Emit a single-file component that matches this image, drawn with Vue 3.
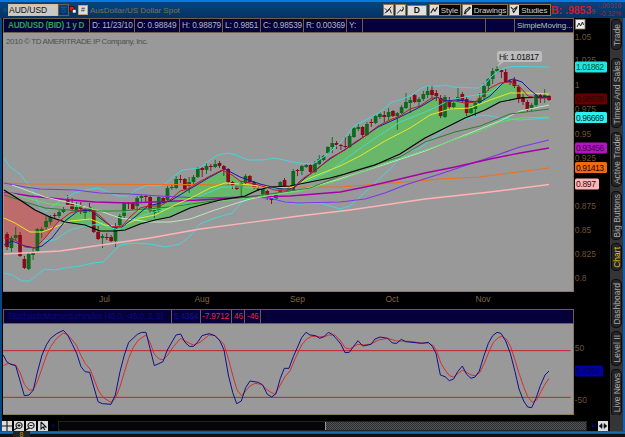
<template>
  <div class="window">
    <header class="toolbar">
      <span class="link-dot"></span>
      <div class="symbol-input">AUD/USD</div>
      <svg class="dropdown" viewBox="0 0 12 12">
        <path d="M2 2.5h8M4 5h4M3 7l3 2.5L9 7" />
      </svg>
      <svg class="link-icon" viewBox="0 0 9 12">
        <rect x="0.5" y="2.5" width="4.5" height="4.5" fill="#e01818" stroke="#200" stroke-width="0.6" />
        <rect x="3.5" y="5.5" width="3.5" height="3.5" fill="#fff" stroke="#222" stroke-width="0.6" />
      </svg>
      <span class="mini-button info">#</span>
      <span class="instrument">AusDollar/US Dollar Spot</span>
      <div class="tools">
        <svg class="tool-icon" viewBox="0 0 11 12">
          <path d="M1 4l3 3 5-5M3 9l4-4 2 5M1 10l3-3" />
        </svg>
        <svg class="tool-icon" viewBox="0 0 11 12">
          <path d="M1.5 10l4-4M5 6a2.2 2.2 0 1 0 3-4M7 8l2-3" />
        </svg>
        <span class="period">D</span>
        <button v-for="tool in tools" :key="tool.name" class="tool" :class="tool.cls">
          <svg class="tool-glyph" viewBox="0 0 11 11"><path :d="tool.icon" /></svg>
          <span>{{ tool.name }}</span>
        </button>
      </div>
      <span class="bid">B: .9853<small>9</small></span>
      <span class="change"><span>-.00316</span><span>-0.32%</span></span>
    </header>

    <div class="body">
      <main class="charts">
        <div class="quote-bar">
          <span v-for="q in quotes" :key="q.text" class="cell" :class="q.cls">{{ q.text }}</span>
        </div>

        <svg class="price-chart" viewBox="3 33 571 259">
          <defs>
            <clipPath id="early"><rect x="3" y="33" width="60" height="259" /></clipPath>
            <clipPath id="late"><rect x="63" y="33" width="511" height="259" /></clipPath>
          </defs>
          <text x="6" y="43.5" class="copyright" textLength="142">2010 © TD AMERITRADE IP Company, Inc.</text>
          <polygon :points="cloud" fill="#bd6b6b" clip-path="url(#early)" />
          <polygon :points="cloud" fill="#69b869" clip-path="url(#late)" />
          <g v-for="c in candles" :key="c.x" :fill="c.color">
            <rect :x="c.x - 0.4" :y="c.high" width="0.9" :height="c.low - c.high" />
            <rect :x="c.x - 1.8" :y="c.top" width="3.7" :height="c.height" />
          </g>
          <polyline
            v-for="line in lines"
            :key="line.name"
            :points="line.points"
            :stroke="line.color"
            :stroke-width="line.width || 1"
            class="line"
          />
          <path d="M497 67l4-7h5z" fill="#bdbdbd" />
          <rect x="497" y="51" width="45" height="11" rx="2.5" fill="#bdbdbd" />
          <text x="499" y="60" class="hi" textLength="40">Hi: 1.01817</text>
          <path d="M573.5 33V292M3 291.5H574" class="frame" />
        </svg>

        <svg class="time-axis" viewBox="3 292 571 17">
          <text v-for="m in months" :key="m.name" :x="m.x" y="302" text-anchor="middle">{{ m.name }}</text>
        </svg>

        <div class="study-bar">
          <span v-for="s in studyCells" :key="s.text" class="cell" :class="s.cls">{{ s.text }}</span>
        </div>

        <svg class="study-chart" viewBox="9 117 1713 273">
          <path d="M9 197H1712M9 337H1712" stroke="#c4202c" stroke-width="3" />
          <polyline class="line" :points="stochSlow" stroke="#d62f2f" stroke-width="3" />
          <polyline class="line" :points="stochFast" stroke="#10108c" stroke-width="3" />
          <path d="M1720.5 117V390M9 388.5H1722" class="frame" stroke-width="3" />
        </svg>
      </main>

      <svg class="price-axis" viewBox="574 18 36 397">
        <rect x="575.5" y="19.5" width="9.5" height="9.5" fill="#eee" stroke="#8b7a58" stroke-width="0.8" />
        <path d="M577 27l2-4 1.5 3 2-4 1 3" class="axis-icon" />
        <text v-for="t in ticks" :key="t.y" x="574.7" :y="t.y + 3">{{ t.label }}</text>
        <g v-for="tag in tags" :key="tag.label">
          <rect x="575" :y="tag.y - 5.5" :width="tag.width" height="11" rx="1.5" :fill="tag.fill" />
          <text
            x="576"
            :y="tag.y + 3"
            :textLength="tag.width - 4"
            :style="{ fill: tag.color }"
          >{{ tag.label }}</text>
        </g>
      </svg>

      <nav class="tabs">
        <div
          v-for="tab in tabs"
          :key="tab.name"
          class="tab"
          :class="{ active: tab.name === 'Chart' }"
          :style="{ height: tab.height + 'px', marginTop: tab.gap + 'px' }"
        >
          <span>{{ tab.name }}</span>
        </div>
      </nav>
    </div>

    <footer class="scroll-row">
      <svg v-for="(icon, i) in zoomIcons" :key="i" class="zoom-icon" viewBox="0 0 10 10">
        <path :d="icon" />
      </svg>
      <span class="arrow left"></span>
      <div class="track"><div class="thumb"></div></div>
      <span class="arrow right"></span>
      <svg class="fit-icon" viewBox="0 0 10 10">
        <path d="M1 5l3-2.5v5zM9 5L6 2.5v5zM3 5h4" />
      </svg>
      <div class="strip-end"></div>
    </footer>
    <div class="bottom-edge"><span class="bottom-tab">8</span></div>
  </div>
</template>

<script setup>
const GREEN = "#0b6b1c";
const RED = "#8c0a18";

const tools = [
  { name: "Style", cls: "style", icon: "M1 9l3-5 2 3 3-5" },
  { name: "Drawings", cls: "drawings", icon: "M2 9l1-3 5-4 1 1-5 5zM1 10h3" },
  { name: "Studies", cls: "studies", icon: "M1 2l3 3 5-4M4 9l5-7M3 6l2 3" },
];

const quotes = [
  { text: "AUD/USD (BID) 1 y D", cls: "q-symbol" },
  { text: "D: 11/23/10", cls: "q-date" },
  { text: "O: 0.98849", cls: "q-open" },
  { text: "H: 0.98879", cls: "q-high" },
  { text: "L: 0.9851", cls: "q-low" },
  { text: "C: 0.98539", cls: "q-close" },
  { text: "R: 0.00369", cls: "q-range" },
  { text: "Y:", cls: "q-y" },
  { text: "", cls: "q-gap" },
  { text: " ", cls: "q-gap2" },
  { text: "SimpleMoving...", cls: "q-study" },
];

const studyCells = [
  { text: "StochasticMomentumIndex (46.0, -46.0, 3, 5)", cls: "s-name" },
  { text: "5.4364", cls: "s-value" },
  { text: "-7.9712", cls: "s-avg" },
  { text: "46", cls: "s-up" },
  { text: "-46", cls: "s-down" },
];

const months = [
  { name: "Jul", x: 104.5 },
  { name: "Aug", x: 202 },
  { name: "Sep", x: 297.5 },
  { name: "Oct", x: 392 },
  { name: "Nov", x: 483 },
];

const ticks = [
  { label: "1.05", y: 37 },
  { label: "1.025", y: 60 },
  { label: "1", y: 85 },
  { label: "0.975", y: 109 },
  { label: "0.95", y: 133.5 },
  { label: "0.925", y: 158 },
  { label: "0.875", y: 206 },
  { label: "0.85", y: 230 },
  { label: "0.825", y: 254 },
  { label: "0.8", y: 278 },
  { label: "50", y: 348 },
  { label: "-50", y: 400 },
];

const tags = [
  { label: "1.01862", y: 67, width: 32, fill: "#1fe6e6", color: "#053" },
  { label: "0.98539", y: 99, width: 32, fill: "#640000", color: "#2c0000" },
  { label: "0.96669", y: 117.5, width: 32, fill: "#2ff0f0", color: "#033" },
  { label: "0.93456", y: 148, width: 32, fill: "#b414c0", color: "#40004c" },
  { label: "0.91413", y: 167.5, width: 32, fill: "#f26a10", color: "#200800" },
  { label: "0.897", y: 184, width: 24, fill: "#ffb4b8", color: "#301010" },
  { label: "5.4364", y: 371, width: 28, fill: "#0000a8", color: "#00004c" },
];

// height and gap above, top to bottom
const tabs = [
  { name: "Trade", height: 31, gap: 1 },
  { name: "Times And Sales", height: 70, gap: 8 },
  { name: "Active Trader", height: 55, gap: 4 },
  { name: "Big Buttons", height: 49, gap: 4 },
  { name: "Chart", height: 28, gap: 3 },
  { name: "Dashboard", height: 49, gap: 8 },
  { name: "Level II", height: 35, gap: 3 },
  { name: "Live News", height: 47, gap: 3 },
];

const zoomIcons = [
  "M5 0v10M0 5h10",
  "M5 1.5a3 3 0 1 0 .1 0M3.5 4.5h3M5 3v3M0 9l3-2",
  "M5 1.5a3 3 0 1 0 .1 0M3.5 4.5h3M0 9l3-2",
  "M3 1v7l2-2 2 3M3 1l5 5H5",
];

// high, open/close top, open/close bottom, low, up (1) or down (0)
const bars = [
  [232, 234, 247, 250, 0], [236, 238, 248, 252, 1], [227, 235, 238, 240, 1], [232, 235, 256, 257, 0],
  [256, 259, 268, 269, 0], [252, 254, 269, 270, 1], [248, 253, 255, 260, 1], [228, 229, 251, 253, 1],
  [227, 229, 231, 238, 1], [216, 221, 227, 230, 1], [215, 217, 222, 225, 1], [213, 215, 216, 219, 0],
  [210, 212, 216, 218, 1], [207, 209, 212, 213, 1], [195, 200, 205, 206, 0], [198, 204, 209, 211, 0],
  [202, 207, 210, 211, 1], [202, 205, 209, 214, 0], [207, 209, 213, 219, 1], [203, 207, 211, 212, 0],
  [208, 210, 232, 233, 0], [226, 232, 239, 240, 0], [234, 236, 238, 248, 1], [233, 237, 238, 240, 0],
  [235, 237, 241, 242, 0], [223, 227, 241, 247, 1], [214, 216, 225, 228, 1], [202, 203, 216, 218, 1],
  [202, 203, 204, 209, 0], [202, 203, 209, 210, 0], [196, 198, 206, 210, 1], [195, 196, 198, 203, 1],
  [195, 196, 197, 202, 0], [196, 197, 211, 213, 0], [208, 210, 213, 218, 1], [196, 197, 211, 213, 1],
  [197, 198, 202, 203, 0], [186, 188, 200, 202, 1], [185, 187, 188, 190, 1], [176, 179, 188, 189, 1],
  [175, 179, 180, 183, 0], [178, 179, 189, 190, 0], [177, 182, 186, 193, 1], [175, 177, 182, 185, 1],
  [167, 168, 177, 178, 1], [167, 168, 170, 177, 0], [163, 166, 170, 174, 1], [164, 166, 167, 171, 0],
  [160, 164, 167, 168, 1], [161, 163, 166, 168, 0], [165, 166, 169, 176, 0], [168, 169, 182, 185, 0],
  [181, 182, 186, 189, 0], [185, 186, 189, 190, 0], [181, 183, 188, 196, 1], [174, 176, 183, 184, 1],
  [175, 176, 182, 183, 0], [181, 182, 188, 189, 0], [186, 188, 190, 191, 0], [188, 189, 194, 196, 1],
  [190, 191, 198, 200, 0], [195, 198, 200, 204, 0], [193, 194, 199, 200, 1], [181, 182, 192, 193, 1],
  [178, 180, 186, 188, 0], [187, 188, 191, 192, 1], [169, 171, 190, 191, 1], [169, 170, 171, 176, 0],
  [165, 166, 171, 175, 1], [164, 165, 167, 168, 1], [164, 165, 172, 173, 0], [161, 163, 172, 173, 1],
  [155, 159, 164, 165, 1], [155, 156, 160, 161, 1], [146, 147, 153, 154, 1], [137, 143, 147, 153, 1],
  [141, 143, 145, 149, 0], [144, 145, 146, 150, 0], [136, 146, 147, 148, 0], [134, 136, 147, 148, 1],
  [127, 128, 137, 138, 1], [123, 127, 129, 131, 1], [126, 127, 135, 137, 0], [122, 124, 135, 136, 1],
  [119, 122, 123, 127, 0], [115, 116, 123, 124, 1], [112, 114, 117, 119, 1], [111, 115, 117, 122, 0],
  [108, 112, 117, 120, 1], [110, 111, 116, 117, 0], [112, 113, 116, 130, 1], [105, 107, 113, 114, 1],
  [93, 102, 108, 109, 1], [97, 100, 103, 113, 1], [94, 95, 102, 103, 0], [97, 99, 102, 107, 1],
  [91, 94, 99, 101, 1], [86, 91, 95, 98, 1], [85, 90, 95, 98, 0], [90, 93, 96, 101, 0],
  [95, 98, 116, 118, 0], [95, 97, 117, 118, 1], [97, 101, 107, 110, 0], [102, 103, 107, 109, 1],
  [88, 97, 100, 102, 1], [92, 94, 100, 102, 0], [97, 99, 113, 116, 0], [106, 108, 113, 114, 1],
  [101, 103, 109, 117, 1], [93, 98, 103, 104, 1], [83, 86, 97, 100, 1], [78, 79, 86, 91, 1],
  [68, 71, 79, 84, 1], [66, 69, 71, 73, 1], [69, 70, 72, 78, 0], [69, 72, 82, 83, 0],
  [79, 81, 82, 85, 0], [77, 80, 86, 88, 0], [85, 87, 99, 103, 0], [93, 97, 102, 105, 0],
  [100, 102, 110, 112, 0], [103, 105, 108, 111, 1], [94, 95, 105, 107, 1], [93, 95, 97, 103, 0],
  [89, 95, 97, 103, 1], [95, 96, 100, 101, 0],
];

const candles = bars.map(([high, top, bottom, low, up], i) => ({
  x: 7 + i * 4.336,
  high,
  low,
  top,
  height: bottom - top,
  color: up ? GREEN : RED,
}));

const slow =
  "4,190 20,200 35,210 50,217 65,222 85,225 100,231 115,231 125,230 140,224 155,220 170,217 190,208 220,200 245,196 258,190 270,187 290,186 310,182 330,178 345,174 375,165 400,154 425,138 445,128 465,118 485,110 500,102 520,98 549,97";
const fast =
  "4,238 15,240 25,247 35,248 45,238 58,222 70,213 85,209 92,210 100,216 112,227 122,226 130,217 140,208 148,206 160,206 170,200 180,191 188,189 197,183 210,176 222,170 232,175 240,181 255,184 265,187 275,190 285,191 293,188 300,181 305,177 315,171 330,158 345,150 355,142 365,136 378,126 390,120 400,116 410,109 420,106 430,99 437,97 445,102 455,101 465,103 475,102 482,97 490,88 500,83 510,82 520,87 528,96 537,98 549,98";
const cloud = slow + " " + fast.split(" ").reverse().join(" ");

const lines = [
  { name: "bandHigh", color: "#42d7dc", points: "4,158 10,167 17,172 21,175 26,182 33,191 40,208 46,212 54,205 65,198 75,193 85,190 98,188 108,192 118,196 127,196 138,189 148,185 158,186 165,184 172,178 182,170 200,168 210,160 218,155 228,153 236,155 248,160 262,160 275,158 288,161 299,163 313,164 325,156 340,143 355,125 370,118 380,112 392,102 400,100 412,95 420,89 427,86 440,86 446,85 452,87 478,88 486,83 492,76 500,70 508,67 520,66.5 549,67" },
  { name: "bandLow", color: "#42d7dc", points: "4,273 12,275 22,281 30,281 38,274 45,269 55,270 65,268 80,266 93,263 103,262 110,255 120,245 135,243 150,244 165,247 180,244 190,236 200,224 215,218 232,213 242,202 255,197 270,197 285,202 298,204 320,203 340,209 350,206 360,197 375,183 390,169 405,153 420,148 435,137 450,125 465,119 478,116 487,115 500,118 520,120 549,118" },
  { name: "bandMid", color: "#48d8c8", points: "42,241 55,240 70,230 85,226 100,224 118,230 133,219 150,213 185,204 200,196 222,187 245,187 290,190 310,180 330,171 355,152 380,135 400,122 430,110 450,100 470,96 490,93 503,83" },
  { name: "ma200", color: "#ffb3b8", width: 1.4, points: "4,254 60,251 150,238 200,229 299,216 350,210 425,199 490,192 549,184.5" },
  { name: "ma150", color: "#ef701c", width: 1.2, points: "4,183 27,184 150,184.5 200,184.7 300,187 340,187 380,184 440,179 480,177 510,173 549,168" },
  { name: "ma100", color: "#8135e8", width: 1.2, points: "4,183 25,187 40,189 75,190 100,193 130,194 160,196 200,198 240,197 270,198 285,202 298,203 340,202 365,199 385,193 405,185 440,174 470,164 500,154 520,147 549,140" },
  { name: "ma120", color: "#a800a8", width: 1.3, points: "4,192 30,196 60,199 95,202 130,203 200,200 250,197 290,196 340,192 370,186 400,179 425,173 455,167 490,159 520,153 549,148" },
  { name: "ma60", color: "#bfe8bb", points: "12,185 45,197 75,204 100,211 120,218 150,222 170,222 190,219 215,210 250,199 300,190 330,182 380,166 425,151 460,137 500,121 520,111 549,105" },
  { name: "ma50", color: "#57e360", points: "4,191 30,199 50,204 75,206 100,210 125,212 150,210 200,203 250,198 300,191 340,180 380,165 425,150 450,141 480,131 500,122 520,118 549,117" },
  { name: "ma40", color: "#2e7d32", points: "4,195 25,202 45,208 80,211 120,211 170,207 220,200 270,194 310,188 350,172 400,157 425,142 455,132 480,126 510,114 549,109" },
  { name: "ma20", color: "#e6e82c", points: "4,218 15,223 30,232 42,232 55,227 70,221 90,219 105,225 120,227 140,218 155,215 175,205 195,196 210,188 225,183 240,184 260,186 290,188 310,178 340,166 360,156 385,141 410,128 430,115 450,109 470,108 490,100 510,93 530,93 549,94" },
  { name: "slow", color: "#000", width: 1.2, points: slow },
  { name: "signal", color: "#1818a8", points: "4,245 12,241 25,246 35,248 42,246 52,238 65,221 78,211 90,210 100,218 112,227 122,227 135,217 148,206 170,201 188,190 210,177 225,169 240,177 260,184 280,189 293,189 305,178 330,159 355,143 378,127 400,117 420,107 437,97 445,101 455,100 480,102 490,96 503,83 513,79 522,82 530,90 540,98 549,97" },
  { name: "fast", color: "#c2182a", points: fast },
];

const stochFast =
  "10,210 20,230 32,238 47,242 73,332 87,330 100,315 112,262 126,210 140,178 152,160 170,146 190,136 203,150 217,178 230,205 243,245 255,260 269,262 294,350 307,356 333,358 346,330 360,260 373,210 386,172 412,148 425,142 438,142 450,190 463,242 489,230 502,195 528,150 542,147 555,172 568,184 581,184 594,170 606,152 627,146 645,152 660,168 672,195 685,270 698,322 710,356 724,348 737,308 750,288 775,292 788,300 802,328 815,336 828,326 841,280 853,250 867,250 880,215 905,158 918,142 930,150 947,152 959,160 973,154 985,142 997,148 1010,162 1023,178 1035,203 1048,202 1061,184 1074,167 1088,183 1113,178 1125,162 1140,156 1163,160 1177,174 1190,175 1204,163 1217,170 1265,175 1285,172 1297,184 1308,205 1321,270 1335,275 1348,287 1361,282 1373,260 1387,243 1400,268 1413,280 1425,276 1438,258 1451,215 1465,175 1478,152 1491,142 1503,145 1517,168 1531,205 1545,260 1557,312 1571,348 1583,366 1595,368 1608,340 1621,302 1635,270 1647,258";
const stochSlow =
  "10,242 25,235 47,240 60,262 73,298 87,315 99,315 112,290 126,250 140,210 152,185 170,160 190,144 203,150 217,165 230,182 243,212 256,236 270,252 283,285 296,318 310,338 333,352 346,340 360,305 373,262 386,220 400,187 415,165 438,150 450,172 463,208 478,222 490,224 502,212 520,185 542,160 555,168 580,180 600,172 627,150 645,152 672,178 685,220 698,270 711,315 725,332 737,318 750,303 765,295 785,298 802,315 824,328 841,300 855,275 870,258 885,222 905,180 920,162 935,154 973,156 985,150 1005,150 1020,165 1035,188 1048,192 1074,178 1095,180 1113,177 1135,165 1163,160 1190,168 1230,169 1265,174 1285,174 1300,182 1310,198 1323,235 1335,255 1348,272 1361,276 1375,265 1387,255 1400,262 1413,270 1427,272 1440,262 1453,235 1467,200 1480,172 1495,158 1505,154 1519,162 1532,185 1545,225 1557,265 1571,305 1583,335 1597,352 1610,345 1623,320 1635,298 1647,280";
</script>

<style>
body {
  background: #000;
  overflow: hidden;
}
</style>

<style scoped>
* {
  box-sizing: border-box;
}

svg {
  display: block;
  flex: none;
}

.window {
  width: 625px;
  height: 437px;
  background: #000;
  font-family: "Liberation Sans", Arial, sans-serif;
  font-size: 8.5px;
  display: flex;
  flex-direction: column;
  overflow: hidden;
}

.toolbar {
  height: 18px;
  flex: none;
  border-top: 2px solid #0879e0;
  background: linear-gradient(#07447e, #063263);
  display: flex;
  align-items: center;
  padding-left: 3px;
  white-space: nowrap;
}

.link-dot {
  width: 4px;
  height: 4px;
  border: 1px solid #0a5698;
  border-radius: 50%;
}

.symbol-input {
  width: 50px;
  height: 12px;
  margin-left: 1px;
  border: 1px solid #d9c08e;
  background: #c9c9c5;
  color: #111;
  font-size: 8.5px;
  line-height: 10px;
}

.dropdown {
  width: 11px;
  height: 12px;
  border: 1px solid #66604a;
  fill: none;
  stroke: #1267b5;
}

.link-icon {
  width: 9px;
  height: 12px;
}

.mini-button {
  width: 10px;
  height: 10px;
  border: 1px solid #b9a67d;
  background: #ddd;
  color: #333;
  font-size: 7px;
  line-height: 8px;
  text-align: center;
}

.instrument {
  margin-left: 2px;
  width: 90px;
  color: #7c7350;
  font-size: 8px;
}

.tools {
  width: 168px;
  margin-left: 203px;
  display: flex;
  align-items: center;
}

.tool-icon {
  width: 11px;
  height: 12px;
  margin-right: 1px;
  background: #dedede;
  border: 1px solid #8f743f;
  fill: none;
  stroke: #222;
  stroke-width: 1.2;
}

.period {
  width: 20px;
  height: 11px;
  margin-right: 2px;
  background: #e2e0dc;
  border: 1px solid #8f743f;
  color: #111;
  font-weight: bold;
  line-height: 9px;
  text-align: center;
}

.tool {
  height: 12px;
  padding: 0;
  display: flex;
  align-items: center;
  gap: 2px;
  background: #050505;
  border: 1px solid #8f743f;
  color: #cfcfcf;
  font-family: inherit;
  font-size: 8px;
  letter-spacing: -0.1px;
}

.tool-glyph {
  width: 9px;
  height: 10px;
  background: #ddd;
  fill: none;
  stroke: #222;
  stroke-width: 1.3;
}

.tool.style {
  width: 32px;
  margin-right: 1px;
}

.tool.drawings {
  width: 47px;
  margin-right: 1px;
}

.tool.studies {
  width: 42px;
}

.bid {
  width: 46px;
  color: #d01a2c;
  font-size: 10.5px;
  font-weight: bold;
}

.bid small {
  font-size: 7px;
  font-weight: normal;
}

.change {
  display: flex;
  flex-direction: column;
  align-items: flex-end;
  width: 24px;
  color: #b01a38;
  font-size: 6.8px;
  line-height: 8px;
}

.body {
  height: 397px;
  flex: none;
  display: flex;
  border-left: 2px solid #0a4884;
  border-right: 2px solid #0a63b8;
  padding-left: 1px;
}

.charts {
  width: 571px;
  flex: none;
}

.quote-bar,
.study-bar {
  height: 15px;
  display: flex;
  background: #05003a;
  border: 1px solid #6f5e48;
}

.cell {
  flex: none;
  border-right: 1px solid #6f5e48;
  padding-left: 2px;
  line-height: 13px;
  font-size: 8.2px;
  letter-spacing: -0.1px;
  color: #b4b4c8;
  white-space: nowrap;
  overflow: hidden;
}

.q-symbol {
  width: 86px;
  padding-left: 4px;
  color: #2ca04c;
  font-weight: bold;
  letter-spacing: -0.25px;
}

.q-date { width: 45px; }
.q-open { width: 45px; }
.q-high { width: 43px; }
.q-low { width: 38px; }
.q-close { width: 43px; }
.q-range { width: 43px; }
.q-y { width: 16px; }
.q-gap { width: 123px; }
.q-gap2 { width: 29px; }

.q-study {
  width: 58px;
  border-right: 0;
  color: #a9c9b4;
  font-size: 8px;
}

.price-chart {
  width: 571px;
  height: 259px;
  background: #999;
}

.frame {
  fill: none;
  stroke: #8d7a5c;
}

.line {
  fill: none;
  stroke-linejoin: round;
}

.copyright {
  font-size: 8px;
  fill: #505050;
}

.hi {
  font-size: 8.5px;
  fill: #111;
}

.time-axis {
  width: 571px;
  height: 17px;
  font-size: 8.5px;
  fill: #806547;
}

.s-name {
  width: 168px;
  padding-left: 4px;
  color: #0a0a80;
  letter-spacing: -0.2px;
}

.s-value {
  width: 29px;
  color: #10109c;
}

.s-avg,
.s-up,
.s-down {
  color: #e02a3c;
}

.s-avg {
  width: 31px;
  padding-left: 1px;
}

.s-up {
  width: 13px;
}

.s-down {
  width: 16px;
}

.study-chart {
  width: 571px;
  height: 91px;
  background: #999;
}

.price-axis {
  width: 36px;
  height: 397px;
  font-size: 8.5px;
  fill: #6d5236;
}

.axis-icon {
  fill: none;
  stroke: #222;
}

.tabs {
  width: 13px;
  flex: none;
  background: #353535;
  padding-left: 1px;
}

.tab {
  width: 11px;
  display: flex;
  align-items: center;
  justify-content: center;
  background: #252525;
  border: 1px solid #0c0c0c;
  border-radius: 4px 5px 5px 4px;
  color: #a8a8a8;
  font-size: 8.5px;
  line-height: 10px;
  white-space: nowrap;
}

.tab span {
  writing-mode: vertical-rl;
  transform: rotate(180deg);
}

.tab.active {
  color: #e0c02c;
}

.scroll-row {
  height: 16px;
  flex: none;
  display: flex;
  align-items: flex-end;
  border-left: 2px solid #0a4884;
  border-right: 2px solid #0a63b8;
}

.zoom-icon {
  width: 10px;
  height: 10px;
  margin-right: 2px;
  background: #dcdcdc;
  fill: none;
  stroke: #181818;
  stroke-width: 1.1;
}

.arrow {
  flex: none;
  width: 0;
  height: 0;
  border: 2.5px solid transparent;
}

.arrow.left {
  margin: 0 4px 3px 2px;
  border-right-color: #0000b0;
  border-left-width: 0;
}

.arrow.right {
  margin: 0 4px 3px 5px;
  border-left-color: #0000b0;
  border-right-width: 0;
}

.track {
  width: 529px;
  height: 10px;
  flex: none;
  display: flex;
  justify-content: flex-end;
  background: #050505;
  border: 1px solid #222;
}

.thumb {
  width: 261px;
  border-left: 1px solid #999;
  background: repeating-conic-gradient(#555 0 25%, #2c2c2c 0 50%) 0 0 / 2px 2px;
}

.fit-icon {
  width: 10px;
  height: 10px;
  background: #ddd;
  fill: #111;
  stroke: #111;
  stroke-width: 0.5;
}

.strip-end {
  width: 13px;
  height: 16px;
  margin-left: auto;
  background: #353535;
}

.bottom-edge {
  height: 6px;
  flex: none;
  background: linear-gradient(#0b4c8c 0, #1878c8 2px, #0a3a68 3px, #111 3px);
  padding-left: 13px;
}

.bottom-tab {
  display: block;
  width: 17px;
  height: 6px;
  background: #222;
  color: #b09a20;
  font-size: 7px;
  line-height: 7px;
  text-align: center;
}
</style>
